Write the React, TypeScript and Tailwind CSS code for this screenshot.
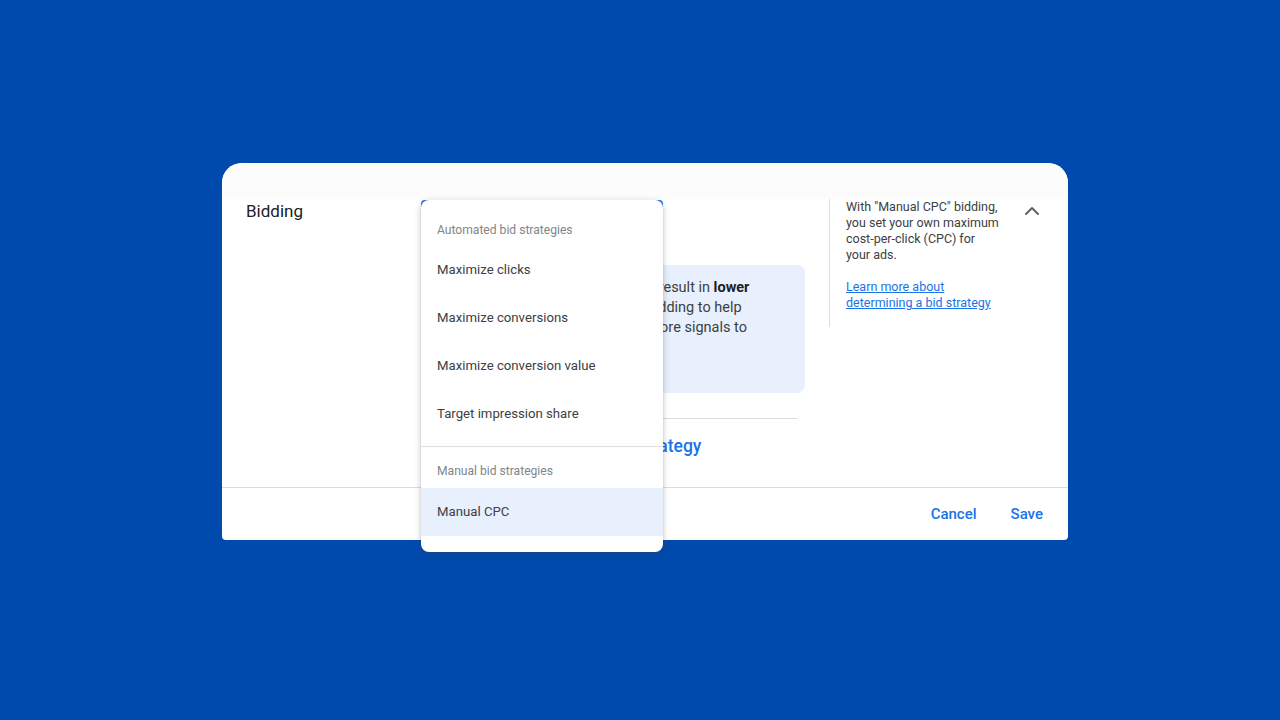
import { ChevronUp } from "lucide-react";

const automated = [
    "Maximize clicks",
    "Maximize conversions",
    "Maximize conversion value",
    "Target impression share",
];

function StrategyMenu() {
    return (
        <div className="absolute left-0 top-0 z-10 w-[242px] rounded-t-[8px] rounded-b-[8px] bg-white pb-[16px] shadow-[0_2px_6px_rgba(60,64,67,0.3),0_1px_2px_rgba(60,64,67,0.15)]">
            <div className="flex h-[46px] items-center px-4 pt-[15px] text-[12.1px] text-[#80868b]">
                Automated bid strategies
            </div>
            {automated.map((item) => (
                <div key={item} className="flex h-[48px] items-center px-4 text-[13.2px] text-[#3c4043]">
                    {item}
                </div>
            ))}
            <div className="mt-[8px] border-t border-[#e0e0e0]" />
            <div className="flex h-[41px] items-center px-4 pt-[8px] text-[12.1px] text-[#80868b]">
                Manual bid strategies
            </div>
            <div className="flex h-[48px] items-center bg-[#e8f0fe] px-4 text-[13.2px] text-[#3c4043]">
                Manual CPC
            </div>
        </div>
    );
}

export default function App() {
    return (
        <div
            className="flex min-h-[720px] w-full bg-[#004aad] pl-[222px] pt-[163px]"
            style={{ fontFamily: "Roboto, 'Noto Sans', sans-serif" }}
        >
            <div className="flex h-[377px] w-[846px] flex-col rounded-t-[20px] rounded-b-[4px] bg-white">
                <div className="h-[36px] rounded-t-[20px] bg-[#fcfcfc]" />
                <div className="flex h-[288px]">
                    {/* Label */}
                    <div className="w-[199px] pl-6 text-[17px] leading-[24px] text-[#202124]">Bidding</div>

                    {/* Middle column */}
                    <div className="w-[384px] pt-[1px]">
                        <div className="relative">
                            <div className="h-[48px] w-[242px] rounded-[4px] border-2 border-[#1a73e8]" />
                            <StrategyMenu />
                        </div>
                        <div className="mt-[17px] h-[128px] rounded-[8px] bg-[#e8f0fe] px-4 pt-[13px] text-[14.5px] leading-[20px] text-[#3c4043]">
                            Using Manual CPC bidding should result in <b className="font-bold text-[#202124]">lower</b>
                            <br />
                            performance results. Use Smart Bidding to help
                            <br />
                            your campaigns intelligently use more signals to
                            <br />
                            optimize bids for every auction.
                        </div>
                        <div className="mr-2 mt-[25px] border-t border-[#dadce0]" />
                        <div className="mt-[15px] pl-4 text-[17.5px] font-medium leading-[24px] text-[#1a73e8]">
                            Select a different bidding strategy
                        </div>
                    </div>

                    {/* Help column */}
                    <div className="ml-6 flex flex-1">
                        <div className="h-[128px] border-l border-[#dadce0] pl-4">
                            <p className="w-[155px] text-[12.5px] leading-[16px] text-[#3c4043]">
                                With "Manual CPC" bidding, you set your own maximum cost-per-click (CPC) for your ads.
                            </p>
                            <p className="mt-4 w-[155px] text-[12.5px] leading-[16px] text-[#1a73e8] underline">
                                Learn more about determining a bid strategy
                            </p>
                        </div>
                        <div className="ml-auto pr-6">
                            <ChevronUp className="h-6 w-6 text-[#5f6368]" strokeWidth={2} />
                        </div>
                    </div>
                </div>

                {/* Footer */}
                <div className="flex h-[53px] items-center justify-end gap-[34px] border-t border-[#dadce0] pr-[25px] text-[15px] font-medium text-[#1a73e8]">
                    <span>Cancel</span>
                    <span>Save</span>
                </div>
            </div>
        </div>
    );
}
